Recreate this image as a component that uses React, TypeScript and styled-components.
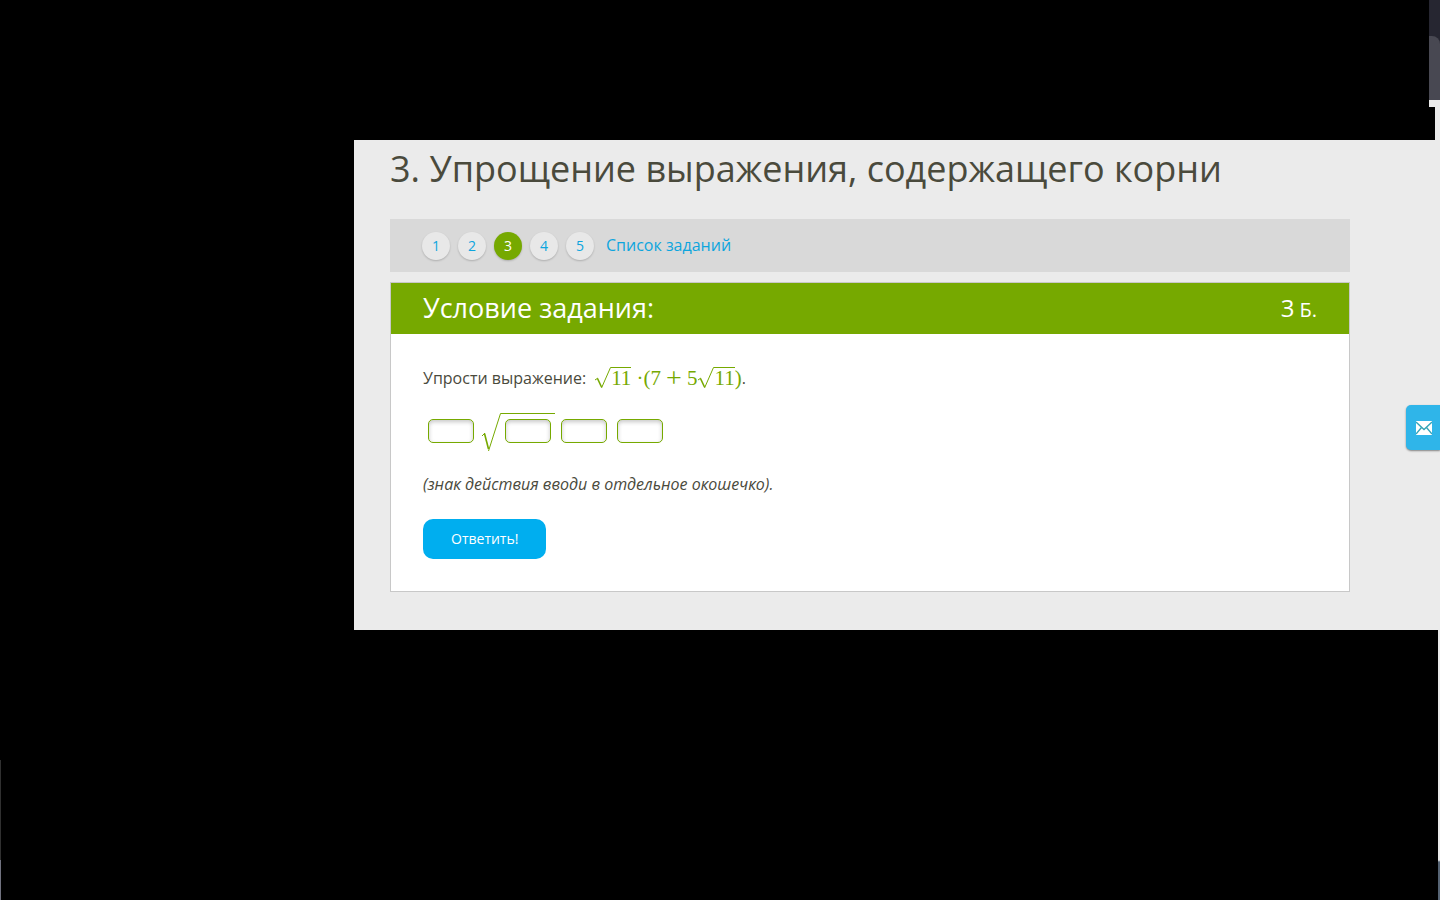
import React from "react";
import styled, { createGlobalStyle } from "styled-components";

const GlobalStyle = createGlobalStyle`
  *, *::before, *::after { box-sizing: border-box; }
  body {
    margin: 0;
    background: #000;
    color: #4a4a3c;
    font-family: "Open Sans", "Noto Sans", sans-serif;
    font-size: 16px;
    line-height: 24px;
  }
`;

const Page = styled.div`
  min-height: 100vh;
  display: flex;
  flex-direction: column;
  background: #000;
`;

const TopBand = styled.div`
  height: 140px;
  display: flex;
  flex-direction: column;
  align-items: flex-end;
`;

const TabStrip = styled.div`
  width: 11px;
  height: 100px;
  padding-top: 36px;
  background: #262631;
`;

const TabEdge = styled.div`
  height: 64px;
  border-top-right-radius: 8px;
  background: #484852;
`;

const Edge = styled.div<{ $width: number; $height: number }>`
  width: ${(p) => p.$width}px;
  height: ${(p) => p.$height}px;
  background: #ebebeb;
`;

const Content = styled.main`
  margin-left: 354px;
  padding: 0 90px 38px 36px;
  background: #ebebeb;
`;

const Title = styled.h1`
  margin: 0;
  padding: 5px 0 26px;
  font-size: 36px;
  line-height: 48px;
  font-weight: 400;
  white-space: nowrap;
`;

const TaskNav = styled.nav`
  display: flex;
  align-items: center;
  gap: 8px;
  height: 53px;
  padding: 0 32px;
  background: #d9d9d9;
`;

const TaskLink = styled.a<{ $active?: boolean }>`
  display: flex;
  align-items: center;
  justify-content: center;
  width: 28px;
  height: 28px;
  border-radius: 50%;
  background: ${(p) => (p.$active ? "#76a900" : "#e8e8e8")};
  color: ${(p) => (p.$active ? "#fff" : "#0da5de")};
  box-shadow: 0 1px 2px rgba(0, 0, 0, 0.2);
  font-size: 14px;
  text-decoration: none;
`;

const ListLink = styled.a`
  margin-left: 4px;
  padding-bottom: 2px;
  color: #0da5de;
  text-decoration: none;
`;

const Card = styled.section`
  margin-top: 10px;
  border: 1px solid #c8c8c8;
  background: #fff;
`;

const CardHeader = styled.header`
  display: flex;
  align-items: center;
  justify-content: space-between;
  height: 51px;
  padding: 0 32px;
  background: #76a900;
  color: #fff;
`;

const CardTitle = styled.h2`
  margin: 0;
  padding-bottom: 2px;
  font-size: 27px;
  line-height: 36px;
  font-weight: 400;
`;

const Points = styled.div`
  display: flex;
  align-items: baseline;
  gap: 5px;
  font-size: 24px;
  line-height: 32px;

  small {
    font-size: 20px;
  }
`;

const CardBody = styled.form`
  padding: 32px;
`;

const Statement = styled.p`
  display: flex;
  align-items: center;
  margin: 0;
`;

const Formula = styled.span`
  display: flex;
  align-items: center;
  margin-left: 8px;
  color: #76a900;
  font-family: "Liberation Serif", serif;
  font-size: 21px;
  white-space: pre;
`;

const Plus = styled.span`
  margin: 0 5px;
  font-size: 28px;
`;

const Root = styled.span`
  display: flex;
  height: 24px;

  svg {
    display: block;
  }
`;

const Radicand = styled.span`
  height: 22px;
  margin-top: 1px;
  border-top: 1px solid #76a900;
  line-height: 20px;
`;

const AnswerRow = styled.div`
  display: flex;
  align-items: center;
  gap: 10px;
  height: 40px;
  margin-top: 21px;
  padding-left: 5px;
`;

const AnswerRoot = styled.div`
  display: flex;
  margin: 0 -4px 0 -2px;

  svg {
    display: block;
  }
`;

const AnswerRadicand = styled.div`
  height: 36px;
  margin-top: 1px;
  padding: 5px 4px 0;
  border-top: 1px solid #76a900;
`;

const AnswerInput = styled.input`
  display: block;
  width: 46px;
  height: 24px;
  padding: 0 6px;
  border: 1px solid #76a900;
  border-radius: 5px;
  background: #fff;
  box-shadow: inset 0 2px 4px rgba(0, 0, 0, 0.22);
  font: inherit;
`;

const Hint = styled.p`
  margin: 21px 0 23px;
  font-style: italic;
`;

const SubmitButton = styled.button`
  display: block;
  height: 40px;
  padding: 0 28px;
  border: 0;
  border-radius: 10px;
  background: #00aeef;
  color: #fff;
  font: inherit;
  font-size: 14px;
  cursor: pointer;
`;

const FeedbackButton = styled.button`
  position: fixed;
  top: 45%;
  right: 0;
  display: flex;
  align-items: center;
  width: 34px;
  height: 45px;
  padding: 0 0 0 10px;
  border: 0;
  border-radius: 5px 0 0 5px;
  background: #2fb5e9;
  box-shadow: 0 1px 2px rgba(0, 0, 0, 0.45);
  cursor: pointer;
`;

const BottomBand = styled.div`
  flex: 1;
  display: flex;
  justify-content: space-between;
  align-items: flex-end;
`;

const LeftSliver = styled.div`
  width: 1px;
  height: 140px;
  background: linear-gradient(#303030 100px, #70727f 100px);
`;

const RightSliver = styled.div`
  align-self: stretch;
  width: 2px;
  background: linear-gradient(to top, #566474 38px, #ebebeb 40px);
`;

const RootOfEleven = () => (
  <Root>
    <svg width="17" height="24" viewBox="0 0 17 24" fill="none" stroke="#76a900" aria-hidden="true">
      <path d="M1 14 L4 12" strokeWidth="1" />
      <path d="M3.5 12.5 L7.5 21" strokeWidth="1.6" />
      <path d="M7.5 22 L16.5 1.5 H17" strokeWidth="1" />
    </svg>
    <Radicand>11</Radicand>
  </Root>
);

const tasks = [1, 2, 3, 4, 5];
const currentTask = 3;

export default function App() {
  return (
    <Page>
      <GlobalStyle />
      <TopBand>
        <TabStrip>
          <TabEdge />
        </TabStrip>
        <Edge $width={11} $height={7} />
        <Edge $width={5} $height={33} />
      </TopBand>
      <Content>
        <Title>3. Упрощение выражения, содержащего корни</Title>
        <TaskNav>
          {tasks.map((n) => (
            <TaskLink
              key={n}
              href={`#task-${n}`}
              $active={n === currentTask}
              aria-current={n === currentTask ? "page" : undefined}
            >
              {n}
            </TaskLink>
          ))}
          <ListLink href="#tasks">Список заданий</ListLink>
        </TaskNav>
        <Card>
          <CardHeader>
            <CardTitle>Условие задания:</CardTitle>
            <Points>
              3 <small>Б.</small>
            </Points>
          </CardHeader>
          <CardBody onSubmit={(e) => e.preventDefault()}>
            <Statement>
              Упрости выражение:
              <Formula>
                <RootOfEleven />
                <span> ·(7</span>
                <Plus>+</Plus>
                <span>5</span>
                <RootOfEleven />
                <span>)</span>
              </Formula>
              .
            </Statement>
            <AnswerRow>
              <AnswerInput aria-label="Коэффициент" />
              <AnswerRoot>
                <svg width="19" height="39" viewBox="0 0 19 39" fill="none" stroke="#76a900" aria-hidden="true">
                  <path d="M0 24 L3 21" strokeWidth="1" />
                  <path d="M2.5 21.5 L6.5 37" strokeWidth="1.6" />
                  <path d="M6.5 39 L18.5 1.5 H19" strokeWidth="1" />
                </svg>
                <AnswerRadicand>
                  <AnswerInput aria-label="Число под корнем" />
                </AnswerRadicand>
              </AnswerRoot>
              <AnswerInput aria-label="Знак действия" />
              <AnswerInput aria-label="Слагаемое" />
            </AnswerRow>
            <Hint>(знак действия вводи в отдельное окошечко).</Hint>
            <SubmitButton type="submit">Ответить!</SubmitButton>
          </CardBody>
        </Card>
      </Content>
      <BottomBand>
        <LeftSliver />
        <RightSliver />
      </BottomBand>
      <FeedbackButton aria-label="Написать сообщение">
        <svg width="16" height="14" viewBox="0 0 16 14" aria-hidden="true">
          <rect width="16" height="14" fill="#fff" />
          <path
            d="M0 1 L8 8.5 L16 1 M0 13 L5.5 6.5 M16 13 L10.5 6.5"
            fill="none"
            stroke="#35a5b8"
            strokeWidth="1.4"
          />
        </svg>
      </FeedbackButton>
    </Page>
  );
}
